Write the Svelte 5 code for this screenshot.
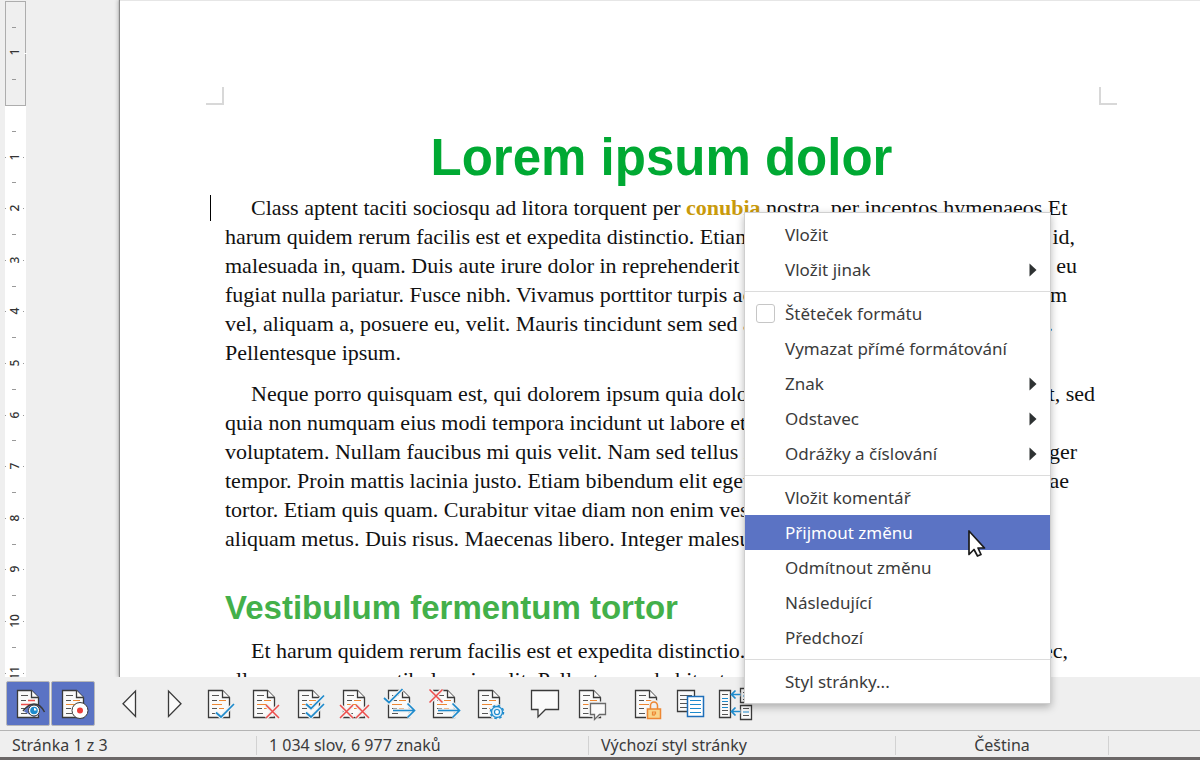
<script>
  const paragraphs = [
    {
      caret: true,
      lines: [
        { start: 'Class aptent taciti sociosqu ad litora torquent per ', mark: 'conubia', rest: ' nostra, per inceptos hymenaeos.', end: 'Et', width: 839 },
        { start: 'harum quidem rerum facilis est et expedita distinctio. Etiam', end: 'sapien elit, tristique id,', width: 850 },
        { start: 'malesuada in, quam. Duis aute irure dolor in reprehenderit in', end: 'voluptate velit eu', width: 852 },
        { start: 'fugiat nulla pariatur. Fusce nibh. Vivamus porttitor turpis ac', end: 'leo. Nunc quam', width: 842 },
        { start: 'vel, aliquam a, posuere eu, velit. Mauris tincidunt sem sed arcu', end: 'nunc posuere.', width: 828 },
        { start: 'Pellentesque ipsum.', width: 873 }
      ]
    },
    {
      lines: [
        { start: 'Neque porro quisquam est, qui dolorem ipsum quia dolor', end: 'sit amet, consequat, sed', width: 870 },
        { start: 'quia non numquam eius modi tempora incidunt ut labore et', end: '', width: 873 },
        { start: 'voluptatem. Nullam faucibus mi quis velit. Nam sed tellus id', end: 'magna. Integer', width: 852 },
        { start: 'tempor. Proin mattis lacinia justo. Etiam bibendum elit eget', end: 'erat vitae', width: 844 },
        { start: 'tortor. Etiam quis quam. Curabitur vitae diam non enim vestib', end: '', width: 873 },
        { start: 'aliquam metus. Duis risus. Maecenas libero. Integer malesu', end: '', width: 873 }
      ]
    }
  ];
  const lastParagraph = [
    { start: 'Et harum quidem rerum facilis est et expedita distinctio.', end: 'Mauris nec,', width: 843 },
    { start: 'ullamcorper ac, vestibulum in, elit. Pellentesque habitant mor', end: '', width: 873 }
  ];

  const menu = [
    [{ label: 'Vložit' }, { label: 'Vložit jinak', sub: true }],
    [
      { label: 'Štěteček formátu', check: true },
      { label: 'Vymazat přímé formátování' },
      { label: 'Znak', sub: true },
      { label: 'Odstavec', sub: true },
      { label: 'Odrážky a číslování', sub: true }
    ],
    [
      { label: 'Vložit komentář' },
      { label: 'Přijmout změnu', active: true },
      { label: 'Odmítnout změnu' },
      { label: 'Následující' },
      { label: 'Předchozí' }
    ],
    [{ label: 'Styl stránky...' }]
  ];

  const tools = [
    { id: 'show', label: 'Zobrazit změny', on: true },
    { id: 'record', label: 'Zaznamenat změny', on: true },
    null,
    { id: 'prev', label: 'Předchozí změna' },
    { id: 'next', label: 'Následující změna' },
    { id: 'accept', label: 'Přijmout změnu' },
    { id: 'reject', label: 'Odmítnout změnu' },
    { id: 'acceptAll', label: 'Přijmout všechny změny' },
    { id: 'rejectAll', label: 'Odmítnout všechny změny' },
    { id: 'acceptNext', label: 'Přijmout a přejít na další' },
    { id: 'rejectNext', label: 'Odmítnout a přejít na další' },
    { id: 'manage', label: 'Spravovat změny' },
    null,
    { id: 'comment', label: 'Vložit komentář' },
    { id: 'changeComment', label: 'Komentář ke změně' },
    null,
    { id: 'protect', label: 'Zamknout změny' },
    { id: 'compare', label: 'Porovnat dokument' },
    { id: 'merge', label: 'Sloučit dokument' }
  ];
  const plain = ['prev', 'next', 'comment', 'compare', 'merge'];
  const origin = 106;
  const step = 51.6;
  const at = (n) => Math.round(origin + n * step);
  const marks = [1, 2, 3, 4, 5, 6, 7, 8, 9, 10, 11];
  const halves = [0.5, 1.5, 2.5, 3.5, 4.5, 5.5, 6.5, 7.5, 8.5, 9.5, 10.5];
</script>

{#snippet row(line)}
  <span class="line" style:width="{line.width}px">
    <span>{line.start}{#if line.mark}<b>{line.mark}</b>{line.rest}{/if}</span>
    {#if line.end}<span>{line.end}</span>{/if}
  </span>
{/snippet}

{#snippet cross(x, y)}
  <path class="red" d="M{x} {y}l13 13m0-13l-13 13" />
{/snippet}

<div class="app">
  <main>
    <svg class="ruler" width="22" height="700" aria-hidden="true">
      <rect x="0" y="106" width="21" height="594" fill="#fff" />
      <rect x="0.5" y="1.5" width="20" height="104" fill="#efefef" stroke="#adadad" />
      <path d="M7 27.5h4M7 79.5h4" stroke="#999" />
      <path d="M19 53.5h3" stroke="#fff" />
      <text text-anchor="middle" transform="translate(14 52) rotate(-90)">1</text>
      {#each halves as h}
        <path d="M7 {at(h) - 0.5}h4" stroke="#999" />
      {/each}
      {#each marks as m}
        <path d="M0 {at(m) - 0.5}h1M18 {at(m) - 0.5}h1" stroke="#999" />
        <text text-anchor="middle" transform="translate(14 {at(m) - 1}) rotate(-90)">{m}</text>
      {/each}
    </svg>
    <article class="page">
      <div class="corners">
        <i class="corner left"></i>
        <i class="corner right"></i>
      </div>
      <h1>Lorem ipsum dolor</h1>
      {#each paragraphs as p}
        <p>
          {#if p.caret}<i class="caret"></i>{/if}
          {#each p.lines as line}{@render row(line)}{/each}
        </p>
      {/each}
      <h2>Vestibulum fermentum tortor</h2>
      <p>{#each lastParagraph as line}{@render row(line)}{/each}</p>
    </article>
  </main>

  <div class="toolbar" role="toolbar" aria-label="Sledování změn">
    {#each tools as t}
      {#if t}
        <button class:on={t.on} aria-label={t.label}>
          <svg width="32" height="32" viewBox="0 0 32 32" aria-hidden="true">
            {#if !plain.includes(t.id)}
              <path class="doc" d="M5.5 2.5h14l7 7v20h-21z" />
              <path class="doc" d="M19.5 2.5v7h7" />
              <path class="txt" d="M9 7.500h7M9 12.500h5M9 20.500h5M9 25.500h6" />
              <path class={t.id === 'show' ? 'red' : 'orange'} d="M16 12.500h7M9 16.500h10M16 20.500h5" />
            {/if}
            {#if t.id === 'show'}
              <path d="M12 23.500C15 18 19 16.500 22 16.500S29 18 32.500 24L22 29z" fill="#5b73c4" />
              <path class="eye" d="M11 23C15 18 18 16 22 16s7.500 2 10.500 8" />
              <circle cx="22" cy="22.500" r="5.500" fill="#fff" stroke="#3a3a3a" />
              <circle cx="22" cy="22.500" r="3.800" fill="#1e8bcd" />
              <path d="M22 22.500v-2.500a2.500 2.500 0 0 1 2.500 2.500z" fill="#fff" />
            {:else if t.id === 'record'}
              <circle cx="23" cy="22.500" r="8" fill="#fff" stroke="#3a3a3a" />
              <circle cx="23" cy="22.500" r="3" fill="#ed3d3b" />
            {:else if t.id === 'prev'}
              <path class="doc" d="M22.500 3v25.500L10 15.700z" />
            {:else if t.id === 'next'}
              <path class="doc" d="M10.500 3v25.500L23 15.700z" />
            {:else if t.id === 'accept'}
              <path class="halo" d="M13 24.500l5 4.500 13-13" />
              <path class="blue" d="M13 24.500l5 4.500 13-13" />
            {:else if t.id === 'reject'}
              <path class="halo" d="M18 17l13 13m0-13l-13 13" />
              {@render cross(18, 17)}
            {:else if t.id === 'acceptAll'}
              <path class="halo" d="M13 24.500l5 4.500 13-13M13 16l5 4.500 13-13" />
              <path class="blue" d="M13 24.500l5 4.500 13-13M13 16l5 4.500 13-13" />
            {:else if t.id === 'rejectAll'}
              <path class="halo" d="M2 17l13 13m0-13l-13 13M18 17l13 13m0-13l-13 13" />
              {@render cross(2, 17)}
              {@render cross(18, 17)}
            {:else if t.id === 'acceptNext' || t.id === 'rejectNext'}
              <path class="halo" d="M10 22.500h21M24.500 15.500l7 7-7 7" />
              <path class="blue" d="M10 22.500h21M24.500 15.500l7 7-7 7" />
              {#if t.id === 'acceptNext'}
                <path class="halo" d="M1 10l5 4.500 13.500-13.500" />
                <path class="blue" d="M1 10l5 4.500 13.500-13.500" />
              {:else}
                <path class="halo" d="M1.500 1.500l13 13m0-13l-13 13" />
                {@render cross(1.5, 1.5)}
              {/if}
            {:else if t.id === 'manage'}
              <circle cx="24" cy="24" r="8" fill="#efefef" />
              <circle cx="24" cy="24" r="5.500" fill="#dbeefb" stroke="#1e8bcd" stroke-width="1.300" />
              <circle cx="24" cy="24" r="6.500" fill="none" stroke="#1e8bcd" stroke-width="1.500" stroke-dasharray="2.600 2.500" />
              <circle cx="24" cy="24" r="2.500" fill="#fff" stroke="#1e8bcd" stroke-width="1.200" />
            {:else if t.id === 'comment'}
              <path class="doc" d="M2.500 2.500h27v19H16.500L9 29v-7.500H2.500z" />
            {:else if t.id === 'changeComment'}
              <path class="halo" d="M16.500 15.500h15v11H25l-4.500 4v-4h-4z" />
              <path class="doc soft" d="M16.500 15.500h15v11H25.500l-5 5v-5h-4z" />
            {:else if t.id === 'protect'}
              <path d="M16 19.500h3v-3a5 5 0 0 1 10 0v3h3V32H16z" fill="#efefef" />
              <path d="M20.500 21v-3.500a3.500 3.500 0 0 1 7 0V21" fill="none" stroke="#ed8733" stroke-width="1.500" />
              <rect x="17.500" y="21" width="13" height="9.500" fill="#f9d58a" stroke="#ed8733" stroke-width="1.500" />
              <path d="M22.500 27.500v-3.500h3v2h-1.500v2" fill="none" stroke="#ed8733" stroke-width="1.200" />
            {:else if t.id === 'compare'}
              <path class="doc" d="M2.500 2.500h17v21h-17z" />
              <path class="txt" d="M5 7.500h12M5 11.500h7M5 15.500h7M5 19.500h7" />
              <path d="M12.500 8.500h16v20h-16z" fill="#fff" stroke="#1e6fba" stroke-width="1.500" />
              <path class="blue thin" d="M15 12.500h11M15 16.500h11M15 20.500h11M15 24.500h11" />
            {:else if t.id === 'merge'}
              <path class="doc" d="M-0.500 2.500h11v27H-0.500z" />
              <path class="txt" d="M2 6.500h6M2 16.500h6M2 22.500h6M2 26.500h6" />
              <path class="blue thin" d="M2 10.500h6M2 13.500h6M2 19.500h6" />
              <path class="doc" d="M20.500 0.500h11v14h-11zM20.500 17.500h11v14h-11z" />
              <path class="txt" d="M23 20.500h6M23 27.500h6M23 4.500h6M23 11.500h6" />
              <path class="blue thin" d="M23 24h6M23 8h6" />
              <path class="halo" d="M20.500 6.500h-9M20.500 23.500h-9" />
              <path class="blue" d="M20.500 6.500h-9M15.500 2.500l-4 4 4 4M20.500 23.500h-9M15.500 19.500l-4 4 4 4" />
            {/if}
          </svg>
        </button>
      {:else}
        <span class="gap"></span>
      {/if}
    {/each}
  </div>

  <footer>
    <span>Stránka 1 z 3</span>
    <span>1 034 slov, 6 977 znaků</span>
    <span>Výchozí styl stránky</span>
    <span class="mid">Čeština</span>
    <span></span>
  </footer>

  <div class="menu" role="menu">
    {#each menu as group}
      <div class="group">
        {#each group as item}
          {#if item.check}
            <label class="item"><input type="checkbox" /><span>{item.label}</span></label>
          {:else}
            <button class="item" class:active={item.active} role="menuitem">
              <span>{item.label}</span>
              {#if item.sub}
                <svg width="8" height="14" viewBox="0 0 8 14" aria-hidden="true"><path d="M0.500 0.500L7.500 7 0.500 13.500z" fill="#2e3233" /></svg>
              {/if}
            </button>
          {/if}
        {/each}
      </div>
    {/each}
  </div>

  <svg class="pointer" width="20" height="30" viewBox="0 0 20 30" aria-hidden="true">
    <path d="M2 2v23.500l5-5 3.500 6.500 3.500-1.500-3-6.500h6.500z" fill="#fff" stroke="#1a1a1a" stroke-width="1.700" stroke-linejoin="round" />
  </svg>
</div>

<style>
  :global(body) {
    margin: 0;
  }
  .app {
    position: relative;
    display: flex;
    flex-direction: column;
    height: 100vh;
    overflow: hidden;
    background: #efefef;
    color: #3b3b3b;
    font-family: "Noto Sans", sans-serif;
  }
  main {
    flex: 1;
    min-height: 0;
    display: flex;
    gap: 93px;
    padding-left: 5px;
    overflow: hidden;
  }
  .ruler {
    flex: none;
  }
  .ruler text {
    font: 500 12px "Noto Sans", sans-serif;
    fill: #333;
  }
  .page {
    flex: 1;
    min-width: 0;
    box-sizing: border-box;
    padding: 0 102px 0 105px;
    background: #fff;
    border-top: 1px solid #e6e6e6;
    box-shadow: -1px 0 1px #888, -3px 0 3px #ccc;
    color: #111;
    font-family: "Liberation Serif", serif;
    font-size: 22px;
    line-height: 29px;
  }
  .corners {
    display: flex;
    justify-content: space-between;
    margin: 86px -19px 0;
  }
  .corner {
    width: 16px;
    height: 16px;
    border-bottom: 2px solid #d8d8d8;
  }
  .left {
    border-right: 2px solid #d8d8d8;
  }
  .right {
    border-left: 2px solid #d8d8d8;
  }
  h1,
  h2 {
    margin: 0;
    font-family: "Liberation Sans", sans-serif;
    font-weight: bold;
  }
  h1 {
    margin-top: 23px;
    color: #00a933;
    font-size: 51px;
    line-height: 60px;
    text-align: center;
  }
  h2 {
    margin-top: 35px;
    color: #43b04a;
    font-size: 33px;
    line-height: 40px;
  }
  p {
    position: relative;
    margin: 5px 0 12px;
  }
  h2 + p {
    margin-top: 8px;
  }
  .line {
    display: flex;
    justify-content: space-between;
    box-sizing: border-box;
    white-space: nowrap;
  }
  .line:first-of-type {
    padding-left: 26px;
  }
  .line > span {
    white-space: pre;
  }
  b {
    color: #c99a0c;
  }
  .caret {
    position: absolute;
    left: -15px;
    top: 2px;
    width: 1px;
    height: 26px;
    background: #000;
  }
  .toolbar {
    display: flex;
    gap: 1px;
    padding: 4px 6px;
    height: 45px;
    border-bottom: 1px solid #b4b4b4;
    background: #efefef;
  }
  .toolbar button {
    display: grid;
    place-items: center;
    width: 44px;
    box-sizing: border-box;
    padding: 0;
    border: 1px solid transparent;
    border-radius: 2px;
    background: none;
  }
  .toolbar .on {
    border-color: #b8b8b8;
    background: #5b73c4;
  }
  .toolbar svg {
    overflow: visible;
  }
  .gap {
    width: 10px;
  }
  .doc {
    fill: #fafafa;
    stroke: #3a3a3a;
    stroke-width: 1.3;
  }
  .soft {
    stroke: #6a6a6a;
  }
  .txt,
  .orange,
  .red,
  .blue,
  .eye,
  .halo {
    fill: none;
    stroke: #555;
    stroke-width: 1.2;
  }
  .orange {
    stroke: #ed8733;
  }
  .red {
    stroke: #ed4d4b;
    stroke-width: 1.5;
  }
  .blue {
    stroke: #1e8bcd;
    stroke-width: 1.7;
  }
  .thin {
    stroke-width: 1;
  }
  .halo {
    stroke: #efefef;
    stroke-width: 4;
  }
  .eye {
    stroke: #3a3a3a;
    stroke-width: 1.5;
  }
  footer {
    display: grid;
    grid-template-columns: 257fr 332fr 307fr 213fr 91fr;
    padding: 5px 0 2px;
    border-bottom: 3px solid #6b6767;
    background: #efefef;
    font-size: 16px;
    line-height: 19px;
    white-space: nowrap;
  }
  footer span {
    padding-left: 12px;
    border-right: 1px solid #d2d2d2;
  }
  footer .mid {
    padding-left: 0;
    text-align: center;
  }
  footer span:last-child {
    border: 0;
  }
  .menu {
    position: absolute;
    left: 744px;
    top: 212px;
    width: 305px;
    padding: 4px 0;
    border: 1px solid #cfcfcf;
    background: #fff;
    box-shadow: 0 3px 8px rgba(0, 0, 0, 0.28);
  }
  .group + .group {
    margin-top: 4px;
    padding-top: 4px;
    border-top: 1px solid #dcdcdc;
  }
  .item {
    display: flex;
    align-items: center;
    justify-content: space-between;
    box-sizing: border-box;
    width: 100%;
    height: 35px;
    padding: 1px 13px 0 40px;
    border: 0;
    background: none;
    color: #3b3b3b;
    font-family: "Noto Sans", sans-serif;
    font-size: 17px;
    line-height: 24px;
    text-align: left;
  }
  label.item {
    justify-content: flex-start;
    gap: 10px;
    padding: 0 13px 0 11px;
  }
  .item input {
    appearance: none;
    box-sizing: border-box;
    width: 19px;
    height: 19px;
    margin: 0;
    border: 1px solid #c6c6c6;
    border-radius: 3px;
    background: #fff;
  }
  .active {
    background: #5b73c4;
    color: #fff;
  }
  .pointer {
    position: absolute;
    left: 967px;
    top: 529px;
  }
</style>
